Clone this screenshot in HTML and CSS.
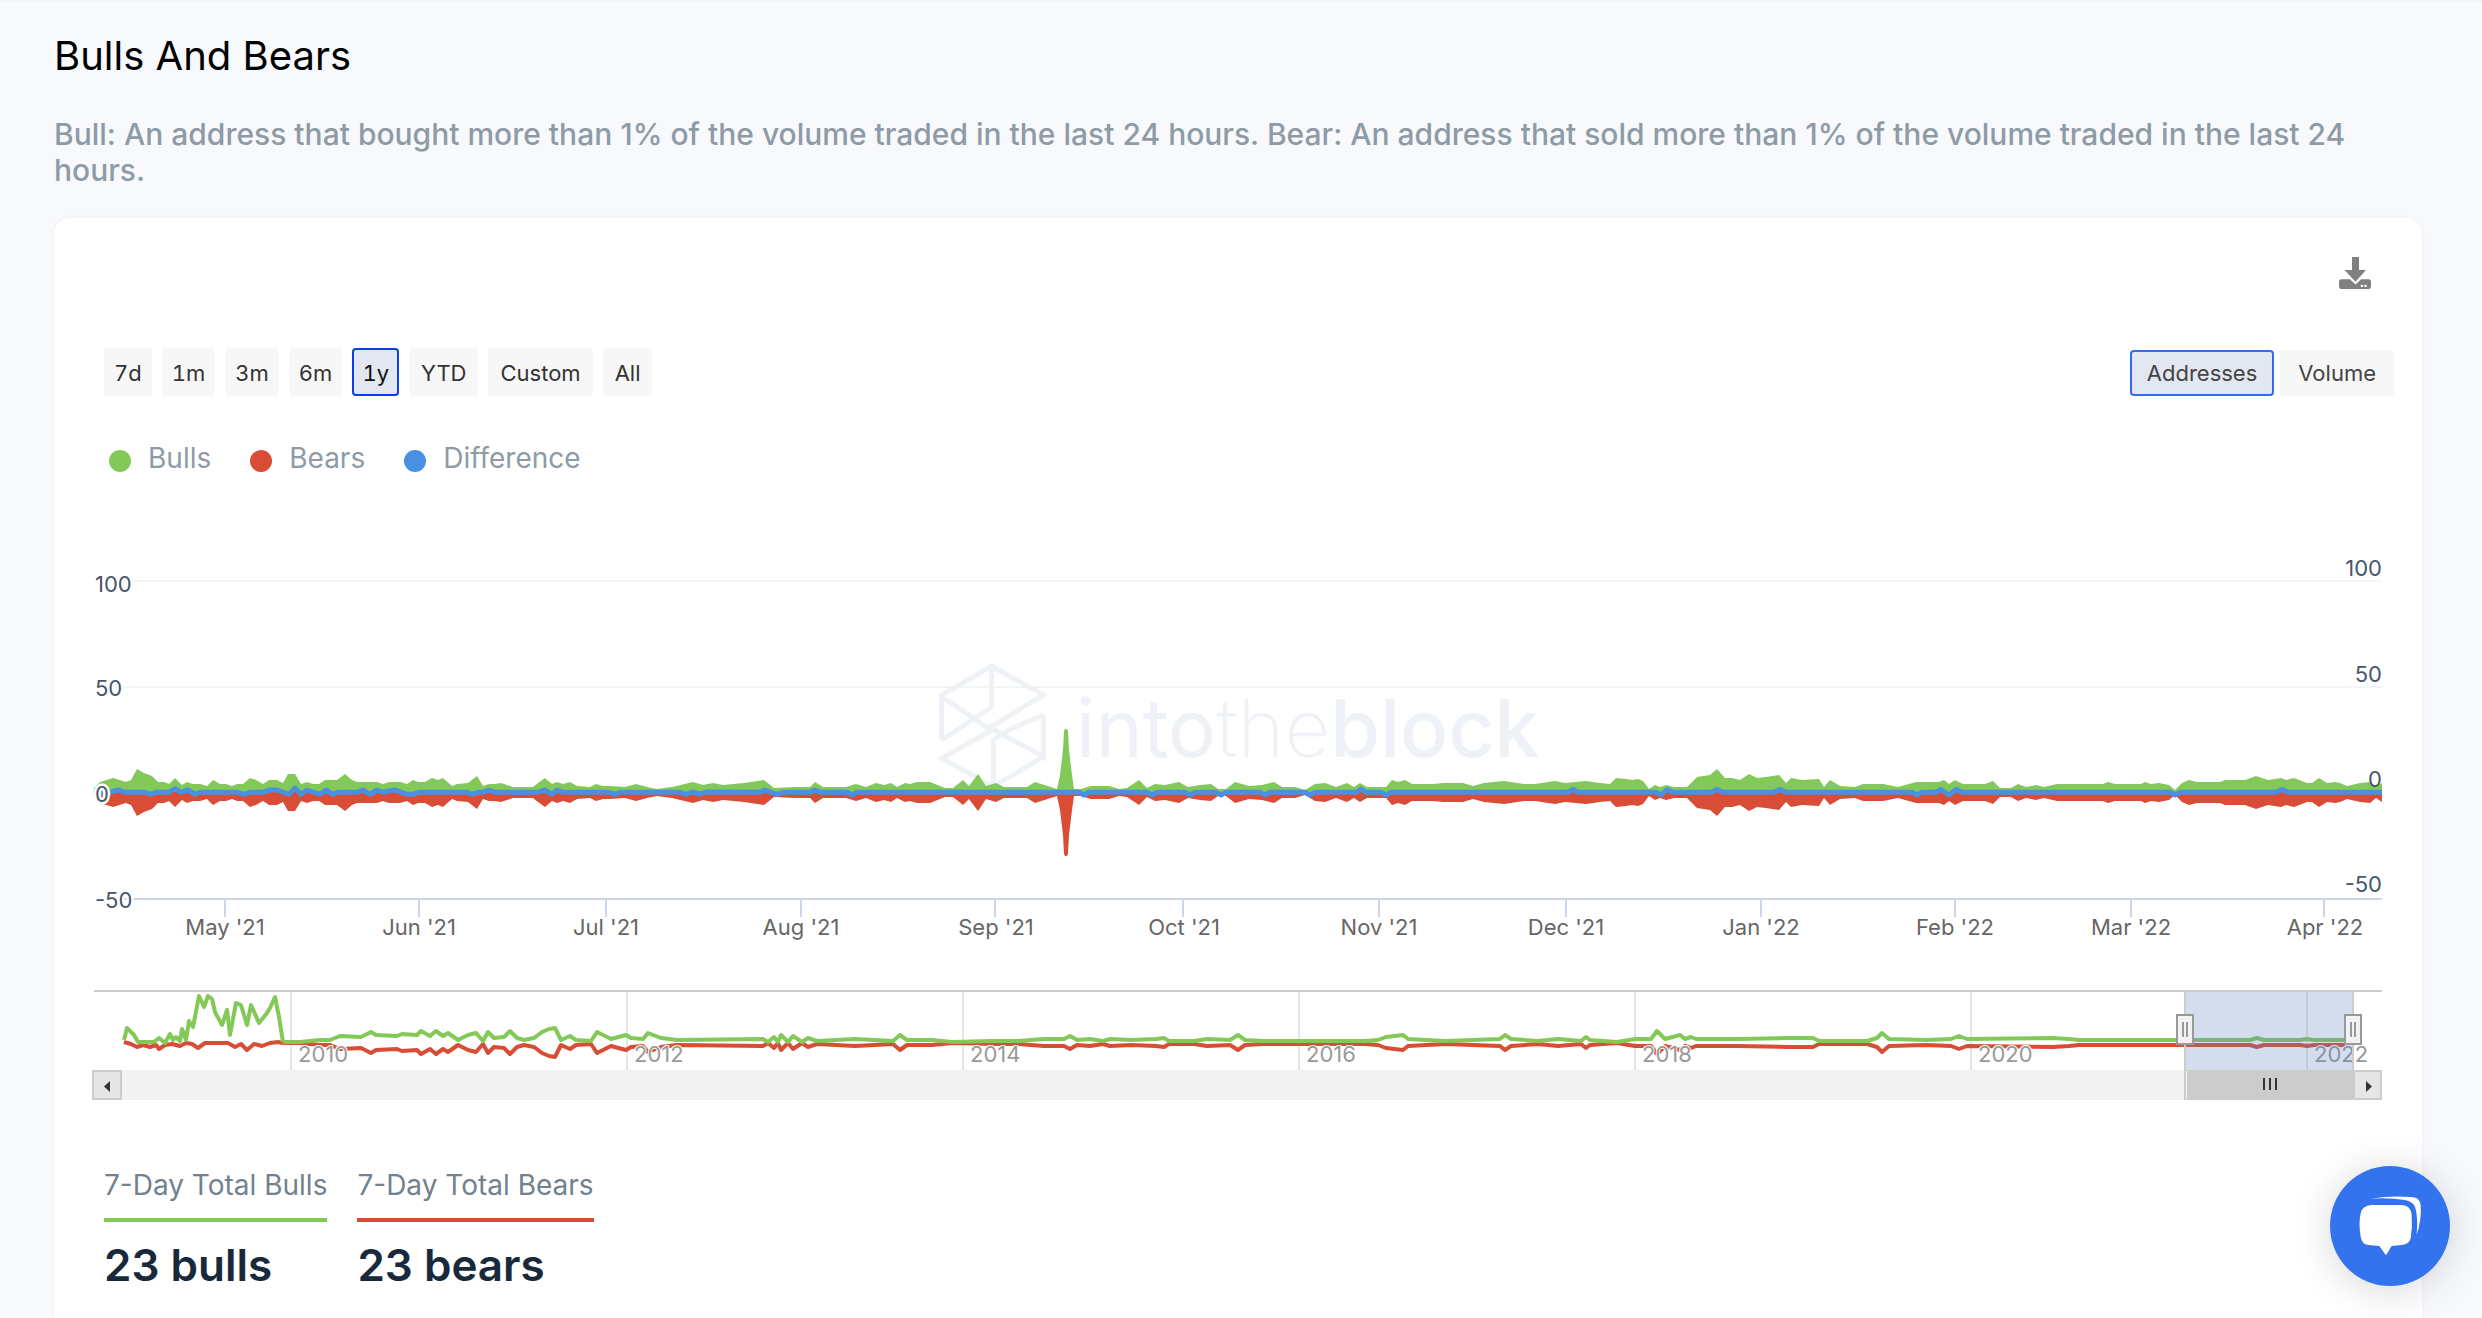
FILE: index.html
```html
<!DOCTYPE html>
<html lang="en">
<head>
<meta charset="utf-8">
<title>Bulls And Bears</title>
<link rel="stylesheet" href="styles.css">
</head>
<body>
<main class="page">
  <h1 class="title">Bulls And Bears</h1>
  <p class="desc">Bull: An address that bought more than 1% of the volume traded in the last 24 hours. Bear: An address that sold more than 1% of the volume traded in the last 24 hours.</p>
  <section class="card">
    <div class="tools">
      <svg class="download" viewBox="0 0 32 32" aria-label="Download">
        <path class="dl-fill" d="M13 0.5a.5.5 0 0 1 .5-.5h6a.5.5 0 0 1 .5.5V13h7L16.500 24.700 5.500 13H13Z"/>
        <path class="dl-fill" d="M2.500 22.300H11L16.500 27.500 22 22.300H29.500a2.500 2.500 0 0 1 2.500 2.500V29.500A2.500 2.500 0 0 1 29.500 32H2.500A2.500 2.500 0 0 1 0 29.500V24.800A2.500 2.500 0 0 1 2.500 22.300Z"/>
        <rect class="dl-dot" x="21.800" y="27.800" width="2.300" height="2.200"/>
        <rect class="dl-dot" x="25.400" y="27.800" width="2.300" height="2.200"/>
      </svg>
    </div>
    <div class="controls">
      <div class="ranges">
        <button class="btn btn-num">7d</button>
        <button class="btn btn-num">1m</button>
        <button class="btn btn-num">3m</button>
        <button class="btn btn-num">6m</button>
        <button class="btn btn-num btn-on">1y</button>
        <button class="btn">YTD</button>
        <button class="btn">Custom</button>
        <button class="btn">All</button>
      </div>
      <div class="modes">
        <button class="btn mode mode-on">Addresses</button>
        <button class="btn mode">Volume</button>
      </div>
    </div>
    <ul class="legend">
      <li class="legend-item"><span class="dot dot-green"></span>Bulls</li>
      <li class="legend-item"><span class="dot dot-red"></span>Bears</li>
      <li class="legend-item"><span class="dot dot-blue"></span>Difference</li>
    </ul>
    <svg class="chart" viewBox="90 540 2300 570" role="img" aria-label="Bulls and bears chart">
      <defs>
        <polygon id="area" points="94,793 94,788 100,782 113,778 126,782 131,780 137,769 144,773 152,776 158,782 164,782 169,784 175,778 182,785 187,782 193,784 200,784 207,786 213,780 220,784 226,784 232,786 237,784 243,784 250,778 256,780 263,784 269,780 277,780 283,783 288,774 295,774 301,784 307,782 313,784 319,784 325,780 337,780 345,774 352,780 357,782 377,782 383,784 389,782 400,782 407,784 413,780 418,782 425,782 432,778 438,780 443,778 452,786 457,784 468,783 477,776 483,786 489,784 495,784 501,783 513,787 533,787 538,783 545,778 552,784 557,782 563,784 570,782 577,786 590,787 596,784 603,786 610,786 625,787 636,784 647,787 657,789 672,787 693,782 703,785 713,783 723,785 744,783 764,780 774,788 795,787 810,787 815,782 823,787 846,787 856,784 866,787 876,783 884,785 891,783 897,787 905,783 910,784 917,782 930,782 945,788 953,788 963,780 969,786 978,774 986,786 996,783 1004,787 1027,787 1035,782 1057,789 1060,775 1063,750 1064,731 1065,729 1067,729 1068,731 1069,750 1072,775 1074,789 1081,789 1091,786 1109,786 1119,789 1127,788 1139,780 1147,788 1155,784 1165,785 1179,782 1188,787 1200,785 1211,784 1218,789 1226,789 1235,782 1249,786 1262,785 1274,782 1282,787 1295,787 1305,790 1315,784 1325,783 1336,787 1347,783 1354,787 1360,783 1367,787 1386,787 1392,780 1398,782 1405,780 1412,784 1433,784 1443,783 1463,783 1473,786 1484,783 1504,781 1524,784 1535,784 1555,781 1565,783 1586,781 1600,783 1610,784 1616,778 1626,779 1632,780 1638,779 1643,781 1649,789 1655,785 1660,787 1666,785 1674,787 1687,787 1697,777 1710,775 1717,769 1725,778 1732,778 1740,780 1749,774 1757,778 1766,777 1779,775 1786,783 1791,778 1802,780 1819,779 1824,787 1830,780 1840,786 1855,787 1863,784 1883,784 1898,787 1916,782 1939,782 1944,780 1949,784 1955,780 1963,784 1985,784 1993,781 2000,788 2011,788 2018,784 2026,787 2036,785 2044,787 2057,784 2103,784 2108,782 2115,784 2141,784 2145,782 2151,784 2159,783 2169,785 2175,790 2182,783 2189,780 2197,782 2220,782 2225,780 2245,780 2256,776 2268,780 2281,778 2286,780 2294,778 2307,783 2312,783 2319,778 2327,783 2335,782 2340,783 2347,786 2360,783 2370,782 2376,787 2382,783 2382,793"/>
        <polyline id="nav-rest" points="283,1042 300,1042 320,1040 330,1040 340,1036 361,1037 371,1032 376,1035 397,1036 402,1034 417,1035 421,1031 430,1036 436,1031 443,1036 448,1033 458,1040 468,1035 476,1033 483,1041 488,1032 494,1038 504,1037 510,1031 517,1038 524,1040 534,1038 542,1032 549,1029 555,1028 561,1040 570,1036 576,1040 591,1041 597,1032 611,1039 626,1035 631,1038 643,1039 648,1033 661,1038 677,1040 763,1039 768,1042 774,1037 778,1042 781,1035 788,1042 793,1036 802,1042 808,1038 817,1041 855,1039 893,1041 900,1035 907,1040 932,1040 952,1042 993,1041 1018,1041 1044,1039 1064,1039 1070,1036 1077,1040 1090,1039 1103,1041 1110,1039 1131,1040 1156,1039 1164,1038 1169,1041 1194,1041 1207,1039 1230,1040 1238,1035 1245,1040 1263,1041 1307,1041 1365,1041 1378,1040 1386,1037 1403,1035 1408,1039 1426,1040 1446,1041 1500,1039 1505,1035 1511,1039 1538,1041 1558,1039 1581,1041 1586,1037 1590,1040 1617,1042 1635,1039 1651,1039 1657,1031 1665,1039 1680,1035 1685,1039 1691,1037 1696,1039 1737,1039 1788,1038 1813,1038 1819,1041 1867,1041 1877,1038 1882,1033 1889,1039 1926,1040 1951,1039 1959,1036 1967,1039 2053,1038 2069,1039 2079,1040 2177,1040 2250,1040 2257,1038 2264,1040 2300,1040 2307,1039 2314,1040 2345,1040"/>
      </defs>

      <line class="grid" x1="95" y1="581" x2="2382" y2="581"/>
      <line class="grid" x1="95" y1="687" x2="2382" y2="687"/>

      <g class="mark" transform="translate(900 640) scale(.33333)">
        <path d="M125 300V165L275 78 430 165 265 265 125 170M275 78V200L240 225 125 300"/>
        <path d="M430 225V350L280 268 125 355 280 440 430 350M280 440V300L330 268 430 225"/>
      </g>
      <text class="mark-text" x="1076" y="757">into<tspan class="mark-thin">the</tspan><tspan class="mark-bold">block</tspan></text>

      <use href="#area" class="bulls"/>
      <use href="#area" class="bears" transform="translate(0 1585) scale(1 -1)"/>
      <polyline class="diff" points="94,794 109,792.300 118,790 125,792.300 145,792.300 150,794.300 156,792.300 169,792.300 175,788.500 181,792.300 188,790 195,794.300 200,792.300 238,792.300 244,794.300 250,792.300 263,792.300 270,790 277,790 289,794.300 295,788 301,794.300 307,790 320,794.300 326,790 333,794.300 338,792.300 357,792.300 363,790 370,794.300 377,790 383,792.300 395,790 407,794.300 413,794.300 419,792.300 467,792.300 472,794.300 478,792.300 483,792.300 489,790 495,792.300 538,792.300 545,790 552,794.300 557,790 563,792.300 609,792.300 614,794.300 620,792.300 680,792.300 686,794.500 692,792 700,794 707,792 760,792.300 765,790 771,792.300 777,794.300 783,792.300 810,792.300 815,790 821,792.300 848,792.300 852,795 857,792.300 1079,792.300 1084,795 1089,792.300 1147,792.300 1152,795 1157,792.300 1185,792.300 1190,795 1195,792.300 1216,792.300 1221,795 1226,792.300 1260,792.300 1265,795 1270,792.300 1305,792.300 1310,795 1315,792.300 1356,792.300 1361,789 1366,792.300 1381,792.300 1386,795 1391,792.300 1568,792.300 1573,789.500 1578,792.300 1656,792.300 1661,795 1667,789.500 1673,792.300 1711,792.300 1717,789.500 1723,792.300 1774,792.300 1780,789.500 1786,792.300 1912,792.300 1917,795 1922,792.300 1936,792.300 1941,789.500 1949,795 1956,789.500 1962,792.300 2170,792.300 2175,795 2180,792.300 2276,792.300 2282,789.500 2288,792.300 2382,792.300"/>

      <line class="axis" x1="95" y1="899" x2="2382" y2="899"/>
      <path class="axis" d="M225 899V917M419 899V917M606 899V917M801 899V917M995 899V917M1183 899V917M1379 899V917M1566 899V917M1761 899V917M1955 899V917M2131 899V917M2324 899V917"/>

      <text class="ylab halo" x="95" y="592">100</text>
      <text class="ylab halo" x="95" y="696">50</text>
      <text class="ylab halo" x="95" y="802">0</text>
      <text class="ylab halo" x="95" y="908">-50</text>
      <text class="ylab end" x="2382" y="576">100</text>
      <text class="ylab end" x="2382" y="682">50</text>
      <text class="ylab end" x="2382" y="787">0</text>
      <text class="ylab end" x="2382" y="892">-50</text>

      <text class="xlab" x="225" y="935">May '21</text>
      <text class="xlab" x="419" y="935">Jun '21</text>
      <text class="xlab" x="606" y="935">Jul '21</text>
      <text class="xlab" x="801" y="935">Aug '21</text>
      <text class="xlab" x="996" y="935">Sep '21</text>
      <text class="xlab" x="1184" y="935">Oct '21</text>
      <text class="xlab" x="1379" y="935">Nov '21</text>
      <text class="xlab" x="1566" y="935">Dec '21</text>
      <text class="xlab" x="1761" y="935">Jan '22</text>
      <text class="xlab" x="1955" y="935">Feb '22</text>
      <text class="xlab" x="2131" y="935">Mar '22</text>
      <text class="xlab" x="2325" y="935">Apr '22</text>

      <path class="nav-grid" d="M291 992V1070M627 992V1070M963 992V1070M1299 992V1070M1635 992V1070M1971 992V1070M2307 992V1070"/>
      <line class="nav-top" x1="94" y1="991" x2="2382" y2="991"/>

      <polyline class="nav-line nav-bears" points="124,1042 131,1044 137,1047 143,1045 150,1047 156,1045 159,1049 165,1045 172,1044 180,1046 186,1043 192,1044 198,1048 205,1043 215,1043 228,1043 235,1047 241,1044 247,1050 254,1044 262,1046 270,1043 278,1042 283,1043"/>
      <use href="#nav-rest" class="nav-line nav-bears" transform="translate(0 2085) scale(1 -1)"/>
      <polyline class="nav-line nav-bulls" points="124,1040 127,1028 134,1035 138,1042 154,1042 159,1038 165,1043 170,1034 173,1040 176,1037 180,1041 182,1029 186,1040 189,1021 193,1027 199,996 204,1007 208,996 212,999 215,1012 222,1025 227,1010 230,1035 236,1003 241,1005 247,1025 251,1005 259,1023 267,1013 270,1008 275,997 279,1017 283,1042"/>
      <use href="#nav-rest" class="nav-line nav-bulls"/>

      <text class="nav-lab" x="298" y="1062">2010</text>
      <text class="nav-lab" x="634" y="1062">2012</text>
      <text class="nav-lab" x="970" y="1062">2014</text>
      <text class="nav-lab" x="1306" y="1062">2016</text>
      <text class="nav-lab" x="1642" y="1062">2018</text>
      <text class="nav-lab" x="1978" y="1062">2020</text>
      <text class="nav-lab" x="2314" y="1062">2022</text>

      <rect class="nav-mask" x="2185" y="992" width="168" height="78"/>
      <path class="nav-edge" d="M2185 992V1070M2353 992V1070"/>

      <rect class="track" x="92" y="1070" width="2290" height="30"/>
      <rect class="thumb" x="2184" y="1070" width="170" height="30"/>
      <line class="thumb-edge" x1="2186.500" y1="1071" x2="2186.500" y2="1099"/>
      <path class="grip" d="M2264 1078V1090M2270 1078V1090M2276 1078V1090"/>
      <rect class="sb-btn" x="93" y="1071" width="28" height="28"/>
      <rect class="sb-btn" x="2354" y="1071" width="27" height="28"/>
      <polygon class="sb-arrow" points="110,1081 104,1086.500 110,1092"/>
      <polygon class="sb-arrow" points="2366,1081 2372,1086.500 2366,1092"/>

      <rect class="handle" x="2177" y="1015" width="16" height="29"/>
      <path class="handle-line" d="M2183 1022V1037M2187 1022V1037"/>
      <rect class="handle" x="2345" y="1015" width="16" height="29"/>
      <path class="handle-line" d="M2351 1022V1037M2355 1022V1037"/>
    </svg>
    <div class="stats">
      <div class="stat">
        <div class="stat-label stat-green">7-Day Total Bulls</div>
        <div class="stat-value">23 bulls</div>
      </div>
      <div class="stat">
        <div class="stat-label stat-red">7-Day Total Bears</div>
        <div class="stat-value">23 bears</div>
      </div>
    </div>
  </section>
</main>
<button class="chat" aria-label="Chat">
  <svg class="chat-icon" viewBox="810 618 360 360">
    <path d="M935 735H1025Q1052 735 1055 765Q1058 800 1052 835Q1048 853 1025 855L995 858 978 886 958 858 925 855Q905 852 902 830Q895 790 902 760Q906 737 935 735Z"/>
    <path d="M932 716Q1000 705 1060 712Q1080 715 1082 735Q1085 780 1070 825Q1075 770 1065 740Q1058 725 1035 720Q985 712 932 716Z"/>
  </svg>
</button>
</body>
</html>
```

FILE: styles.css
```css
* { box-sizing: border-box; }
html, body { margin: 0; height: 1318px; overflow: hidden; }
body { background: #f7f9fc; font-family: Inter, "Liberation Sans", sans-serif; }
.page { height: 1318px; padding: 35px 60px 0 54px; overflow: hidden; box-shadow: inset 0 4px 3px -2px rgba(0,0,0,.03); }
.title { margin: 0; font-size: 40px; line-height: 42px; font-weight: 400; color: #000; }
.desc { margin: 39px 0 0; max-width: 2310px; font-size: 30px; line-height: 36px; font-weight: 500; color: #8e9ba6; }
.card { margin-top: 30px; height: 1200px; background: #fff; border-radius: 16px; padding: 39px 28px 0 50px; box-shadow: 0 0 4px rgba(0,0,0,.05); }
.tools { display: flex; justify-content: flex-end; padding-right: 23px; }
.download { display: block; width: 32px; height: 32px; }
.dl-fill { fill: #808080; }
.dl-dot { fill: #fff; }
.controls { display: flex; justify-content: space-between; align-items: flex-end; margin-top: 59px; }
.ranges { display: flex; gap: 10px; }
.modes { display: flex; gap: 6px; }
.btn { height: 48px; padding: 2px 12px 0; border: 0; border-radius: 4px; background: #f7f7f7; font-family: inherit; font-size: 22px; color: #333; }
.btn-num { padding: 2px 10px 0; font-variant-numeric: tabular-nums; }
.btn-on { background: #e2e7f2; box-shadow: inset 0 0 0 2px #0b3fe8; color: #111; }
.mode { height: 46px; padding: 0 18px; color: #444; }
.mode-on { padding: 0 17px; background: #e2e7f2; box-shadow: inset 0 0 0 2px #2e6fe8; }
.legend { display: flex; gap: 39px; list-style: none; margin: 45px 0 0; padding: 0 0 0 5px; }
.legend-item { display: flex; align-items: center; gap: 17px; height: 34px; font-size: 28px; color: #8e9ba6; }
.dot { width: 22px; height: 22px; margin-top: 5px; border-radius: 50%; }
.dot-green { background: #82c958; }
.dot-red { background: #d94c35; }
.dot-blue { background: #4a90e2; }
.chart { display: block; width: 2300px; height: 570px; margin: 65px 0 0 -14px; font-family: Inter, "Liberation Sans", sans-serif; }
.grid { stroke: #f3f6f8; stroke-width: 2; }
.mark path { fill: none; stroke: #eef1f6; stroke-width: 15; }
.mark-text { font-size: 80px; font-weight: 400; fill: #eef1f6; }
.mark-thin { font-weight: 200; }
.mark-bold { font-weight: 500; }
.bulls { fill: #82c958; }
.bears { fill: #d94c35; }
.diff { fill: none; stroke: #4a90e2; stroke-width: 5; stroke-linejoin: round; }
.axis { stroke: #ccd6eb; stroke-width: 2; fill: none; }
.ylab { font-size: 22px; fill: #47566b; }
.end { text-anchor: end; }
.halo { paint-order: stroke; stroke: #fff; stroke-width: 5px; stroke-linejoin: round; }
.xlab { font-size: 22px; fill: #666; text-anchor: middle; }
.nav-grid { stroke: #e6e6e6; stroke-width: 2; fill: none; }
.nav-top { stroke: #ccc; stroke-width: 2; }
.nav-line { fill: none; stroke-width: 4; stroke-linejoin: round; }
.nav-bulls { stroke: #82c958; }
.nav-bears { stroke: #d94c35; }
.nav-lab { font-size: 22px; fill: #999; paint-order: stroke; stroke: #fff; stroke-width: 2px; }
.nav-mask { fill: rgba(102,133,194,.28); }
.nav-edge { stroke: #ccc; stroke-width: 2; fill: none; }
.track { fill: #f2f2f2; }
.thumb { fill: #ccc; }
.thumb-edge { stroke: #f2f2f2; stroke-width: 1; }
.grip { stroke: #333; stroke-width: 2; fill: none; }
.sb-btn { fill: #e6e6e6; stroke: #ccc; stroke-width: 2; }
.sb-arrow { fill: #333; }
.handle { fill: #f2f2f2; stroke: #999; stroke-width: 2; }
.handle-line { stroke: #999; stroke-width: 2; fill: none; }
.stats { display: flex; gap: 30px; margin-top: 58px; }
.stat-label { height: 54px; line-height: 34px; font-size: 28px; color: #73818c; border-bottom: 4px solid; }
.stat-green { border-color: #82c958; }
.stat-red { border-color: #d94c35; }
.stat-value { margin-top: 17px; font-size: 44px; line-height: 52px; font-weight: 600; color: #17293a; }
.chat { position: fixed; right: 32px; bottom: 32px; width: 120px; height: 120px; padding: 0; border: 0; border-radius: 50%; background: #3373ee; box-shadow: 0 4px 40px rgba(0,0,0,.16); }
.chat-icon { display: block; width: 120px; height: 120px; fill: #fff; }
```
